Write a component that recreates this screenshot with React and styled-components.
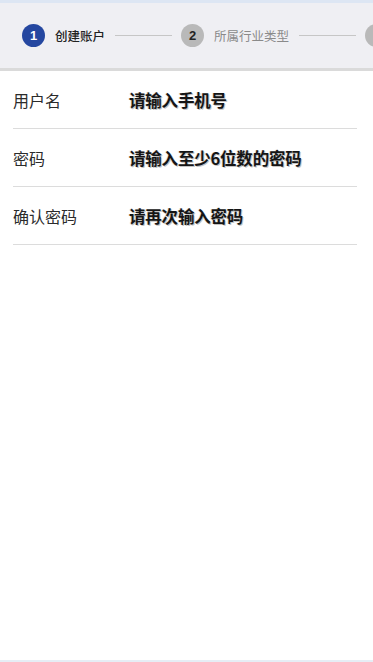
import React from 'react'
import styled, { createGlobalStyle } from 'styled-components'

const GlobalStyle = createGlobalStyle`
  html, body {
    margin: 0;
    padding: 0;
    background: #ffffff;
  }
  body {
    font-family: "Noto Sans CJK SC", "Noto Sans", sans-serif;
  }
`

const Page = styled.div`
  width: 373px;
  height: 662px;
  display: flex;
  flex-direction: column;
  background: #fff;
  border-top: 3px solid #dde6f3;
  border-bottom: 2px solid #e6edf5;
  box-sizing: border-box;
  overflow: hidden;
`

const Steps = styled.div`
  height: 65px;
  flex-shrink: 0;
  display: flex;
  align-items: center;
  padding-left: 22px;
  background: #efeff3;
  border-bottom: 3px solid #dadada;
  overflow: hidden;
  white-space: nowrap;
`

const Step = styled.div`
  display: flex;
  align-items: center;
  flex-shrink: 0;
`

const Dot = styled.div`
  width: 23px;
  height: 23px;
  border-radius: 50%;
  flex-shrink: 0;
  display: flex;
  align-items: center;
  justify-content: center;
  background: ${({ active }) => (active ? '#2547a0' : '#b9b9b9')};
  color: ${({ active }) => (active ? '#ffffff' : '#222222')};
  font-family: "Liberation Sans", sans-serif;
  font-weight: 700;
  font-size: 13px;
`

const StepLabel = styled.span`
  margin-left: 10px;
  font-size: 12.5px;
  color: ${({ active }) => (active ? '#222222' : '#8a8a8a')};
  font-weight: ${({ active }) => (active ? 500 : 400)};
`

const Connector = styled.div`
  width: 57px;
  height: 1px;
  flex-shrink: 0;
  background: #c6c6c6;
  margin: 0 9px 0 10px;
`

const Form = styled.div`
  display: flex;
  flex-direction: column;
  padding: 0 16px 0 13px;
`

const Row = styled.div`
  height: 57px;
  display: flex;
  align-items: center;
  border-bottom: 1px solid #dcdcdc;
`

const Label = styled.div`
  width: 116px;
  flex-shrink: 0;
  font-size: 16px;
  color: #2b2b2b;
`

const Placeholder = styled.div`
  font-size: 16.5px;
  font-weight: 700;
  color: #151515;
  letter-spacing: -0.2px;
  text-shadow: 1px 1px 0 #c4c4c4, -1px 0 0 #e4e4e4;
`

// the third step only peeks in at the right edge, so it carries no visible text
const steps = [
  { n: 1, label: '创建账户', active: true },
  { n: 2, label: '所属行业类型', active: false },
  { n: 3, label: null, active: false }
]

const fields = [
  { label: '用户名', placeholder: '请输入手机号' },
  { label: '密码', placeholder: '请输入至少6位数的密码' },
  { label: '确认密码', placeholder: '请再次输入密码' }
]

export default function App () {
  return (
    <>
      <GlobalStyle />
      <Page>
        <Steps>
          {steps.map((s, i) => (
            <React.Fragment key={s.n}>
              <Step>
                <Dot active={s.active}>{s.label ? s.n : null}</Dot>
                {s.label && <StepLabel active={s.active}>{s.label}</StepLabel>}
              </Step>
              {i < steps.length - 1 && <Connector />}
            </React.Fragment>
          ))}
        </Steps>
        <Form>
          {fields.map((f) => (
            <Row key={f.label}>
              <Label>{f.label}</Label>
              <Placeholder>{f.placeholder}</Placeholder>
            </Row>
          ))}
        </Form>
      </Page>
    </>
  )
}
